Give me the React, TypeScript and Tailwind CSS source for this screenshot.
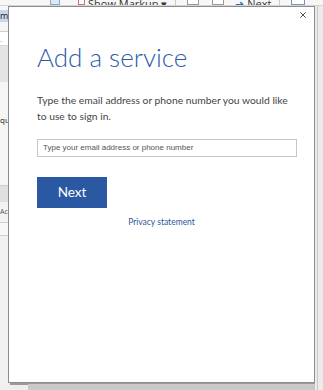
import { X } from "lucide-react";

function RibbonStrip() {
  return (
    <div className="absolute left-0 top-0 flex h-[6px] w-full items-end overflow-hidden border-b border-[#d4d4d4] bg-[#f7f7f7] pl-[50px] text-[11px] leading-[12px] text-[#333]">
      <div className="h-[8px] w-[10px] border border-[#8aa6d0] bg-[#dfe8f5]" />
      <div className="ml-[18px] h-[8px] w-[7px] border border-[#c07a6a] bg-white" />
      <span className="ml-[3px] h-[7px] whitespace-nowrap">Show Markup ▾</span>
      <div className="ml-[8px] h-full w-px bg-[#c8c8c8]" />
      <div className="ml-[11px] h-[8px] w-[12px] border border-[#999] bg-white" />
      <div className="ml-[13px] h-[8px] w-[12px] border border-[#999] bg-white" />
      <span className="ml-[11px] h-[7px] whitespace-nowrap">
        <span className="text-[#2b6cc4]">➜</span> Next
      </span>
      <div className="ml-[8px] h-full w-px bg-[#c8c8c8]" />
      <div className="ml-[11px] h-[8px] w-[14px] border border-[#7a93c0] bg-white" />
    </div>
  );
}

function LeftStrip() {
  return (
    <div className="flex w-[8px] flex-col overflow-hidden bg-[#f0f0f0]">
      <div className="h-[4px] bg-[#f7f7f7]" />
      <div className="h-[12px] bg-[#c5d7ee] text-[9px] leading-[12px] text-[#222]">m</div>
      <div className="h-[10px] border-b border-[#cfcfcf] bg-[#f5f5f5]" />
      <div className="h-[14px] border-b border-[#d8d8d8] bg-white text-[8px] leading-[14px] text-[#888]">.</div>
      <div className="h-[36px] bg-[#e4e4e4]" />
      <div className="h-[32px] bg-[#f5f5f5]" />
      <div className="h-[12px] bg-[#f5f5f5] text-[8px] leading-[12px] text-[#222]">qu</div>
      <div className="h-[60px] border-b border-[#cfcfcf] bg-[#f5f5f5]" />
      <div className="h-[16px] bg-[#e0e0e0]" />
      <div className="h-[20px] bg-[#f3f3f3] text-[7px] leading-[20px] text-[#555]">Ac</div>
      <div className="h-[14px] border-y border-[#d0d0d0] bg-[#f7f7f7]" />
      <div className="flex-1 bg-[#f0f0f0]" />
    </div>
  );
}

function Dialog() {
  return (
    <div className="flex h-[377px] w-[307px] flex-col border border-[#8c8c8c] bg-white shadow-[2px_2px_0_#9a9a9a]">
      <div className="flex justify-end pr-[6px] pt-[3px]">
        <X className="h-[10px] w-[10px] text-[#333]" strokeWidth={2} />
      </div>
      <div className="flex flex-col px-[28px] font-['Lato',sans-serif]">
        <h1 className="mt-[21px] text-[26px] font-light leading-[32px] text-[#2c5ba9]">
          Add a service
        </h1>
        <p className="mt-[19px] w-[262px] text-[10.3px] leading-[16px] text-[#444]">
          Type the email address or phone number you would like to use to sign in.
        </p>
        <div className="mt-[15px] flex h-[18px] w-[260px] items-center border border-[#c6c6c6] px-[5px] font-['Liberation_Sans',sans-serif] text-[8px] text-[#555]">
          Type your email address or phone number
        </div>
        <button className="mt-[20px] flex h-[31px] w-[70px] items-center justify-center bg-[#2b58a3] text-[13.5px] text-white">
          Next
        </button>
        <p className="mt-[8px] text-center text-[8.5px] text-[#2b579a]">Privacy statement</p>
      </div>
    </div>
  );
}

export default function App() {
  return (
    <div className="relative h-[390px] w-[323px] overflow-hidden bg-[#eeeeee] font-['Open_Sans',sans-serif]">
      <RibbonStrip />
      <div className="flex h-full pt-[6px]">
        <LeftStrip />
        <div className="flex flex-1 flex-col">
          <Dialog />
          <div className="ml-[20px] mt-[1px] h-[6px] w-[287px] bg-[#c9c9c9]" />
        </div>
        <div className="w-[8px] bg-[#ececec]">
          <div className="ml-[2px] h-full w-px bg-[#c8c8c8]" />
        </div>
      </div>
    </div>
  );
}
